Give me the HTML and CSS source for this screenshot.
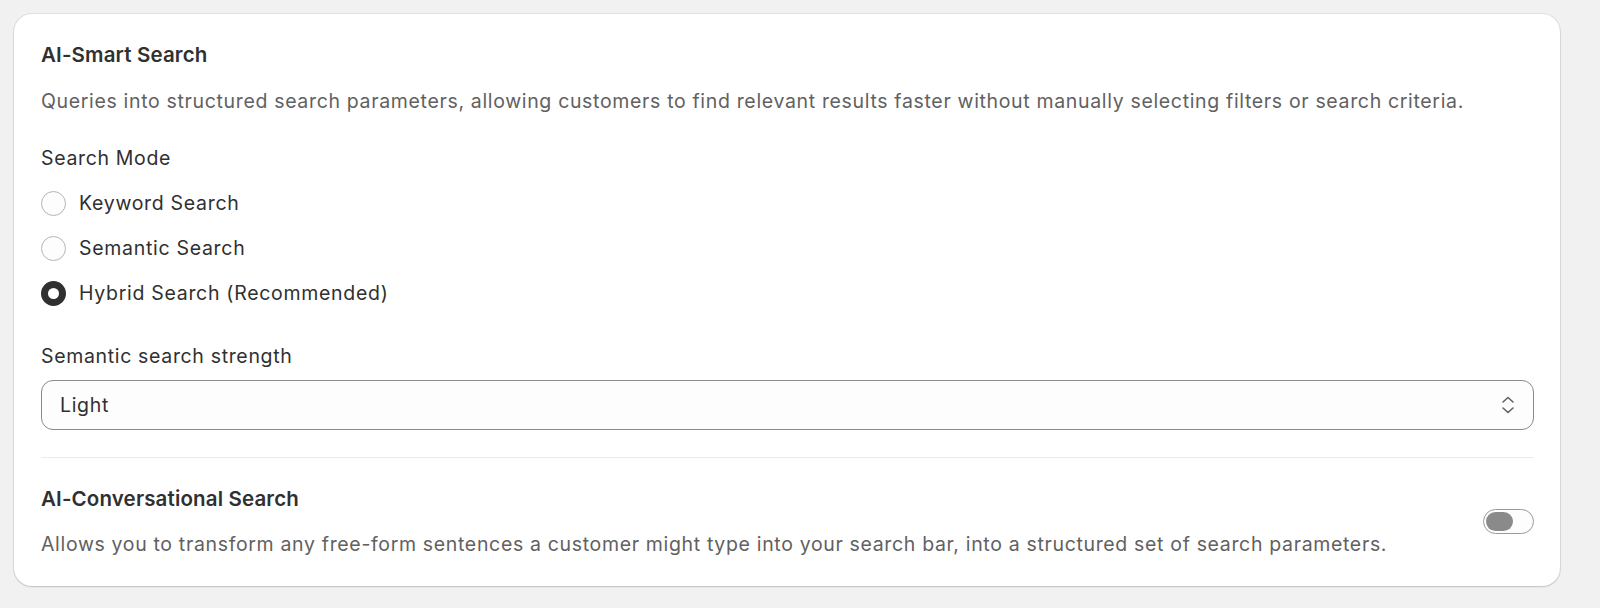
FILE: index.html
```html
<!DOCTYPE html>
<html lang="en">
<head>
<meta charset="utf-8">
<title>AI Search Settings</title>
<link rel="stylesheet" href="styles.css">
</head>
<body>
<div class="page">
  <section class="card">
    <h2 class="heading">AI-Smart Search</h2>
    <p class="desc">Queries into structured search parameters, allowing customers to find relevant results faster without manually selecting filters or search criteria.</p>

    <div class="group-label">Search Mode</div>
    <div class="radios">
      <label class="radio-row"><span class="radio"></span><span class="radio-text">Keyword Search</span></label>
      <label class="radio-row"><span class="radio"></span><span class="radio-text">Semantic Search</span></label>
      <label class="radio-row"><span class="radio radio-on"></span><span class="radio-text">Hybrid Search (Recommended)</span></label>
    </div>

    <div class="field-label">Semantic search strength</div>
    <div class="select">
      <span class="select-value">Light</span>
      <svg class="select-icon" width="16" height="20" viewBox="0 0 16 20" fill="none" stroke="#616161" stroke-width="1.6" stroke-linecap="round" stroke-linejoin="round">
        <path d="M3 7 L8 2.5 L13 7"/>
        <path d="M3 13 L8 17.5 L13 13"/>
      </svg>
    </div>

    <hr class="divider">

    <div class="toggle-section">
      <div class="toggle-text">
        <h2 class="heading">AI-Conversational Search</h2>
        <p class="desc desc-tight">Allows you to transform any free-form sentences a customer might type into your search bar, into a structured set of search parameters.</p>
      </div>
      <span class="toggle"><span class="knob"></span></span>
    </div>
  </section>
</div>
</body>
</html>
```

FILE: styles.css
```css
* { box-sizing: border-box; }

html, body {
  margin: 0;
  padding: 0;
  background: #f1f1f1;
}

body {
  font-family: Inter, "Noto Sans", "Liberation Sans", sans-serif;
  color: #303030;
}

.page {
  padding: 14px 40px 22px 14px;
}

.card {
  background: #ffffff;
  border-radius: 18px;
  box-shadow: 0 0 0 1px rgba(0, 0, 0, 0.07), 0 1px 2px rgba(0, 0, 0, 0.14);
  padding: 26px 26px 27px 27px;
}

.heading {
  margin: 0;
  font-size: 20.5px;
  line-height: 30px;
  font-weight: 600;
  letter-spacing: 0.15px;
  color: #303030;
}

.desc {
  margin: 16px 0 0;
  font-size: 19.5px;
  line-height: 30px;
  letter-spacing: 0.66px;
  color: #616161;
}

.desc-tight {
  margin-top: 15px;
}

.group-label {
  margin-top: 27px;
  font-size: 19.5px;
  line-height: 30px;
  letter-spacing: 0.66px;
}

.radios {
  margin-top: 15px;
  display: flex;
  flex-direction: column;
  gap: 15px;
}

.radio-row {
  display: flex;
  align-items: center;
  gap: 13px;
  height: 30px;
  font-size: 19.5px;
  line-height: 30px;
  letter-spacing: 0.7px;
  color: #303030;
}

.radio {
  width: 25px;
  height: 25px;
  border-radius: 50%;
  border: 1px solid #b5b5b5;
  background: #fdfdfd;
  flex: none;
}

.radio-on {
  border: 7px solid #303030;
  background: #ffffff;
}

.field-label {
  margin-top: 33px;
  font-size: 19.5px;
  line-height: 30px;
  letter-spacing: 0.66px;
}

.select {
  margin-top: 9px;
  height: 50px;
  border: 1px solid #8a8a8a;
  border-radius: 12px;
  background: #fdfdfd;
  display: flex;
  align-items: center;
  justify-content: space-between;
  padding: 0 17px 0 18px;
}

.select-value {
  font-size: 19.5px;
  letter-spacing: 0.66px;
  color: #303030;
}

.select-icon {
  flex: none;
}

.divider {
  margin: 27px 0 0;
  border: 0;
  height: 1px;
  background: #ebebeb;
}

.toggle-section {
  margin-top: 26px;
  display: flex;
  align-items: center;
  justify-content: space-between;
}

.toggle {
  flex: none;
  width: 51px;
  height: 25px;
  border: 1.5px solid #9a9a9a;
  border-radius: 13px;
  background: #fdfdfd;
  display: flex;
  align-items: center;
  padding-left: 2px;
}

.knob {
  width: 27px;
  height: 19px;
  border-radius: 10px;
  background: #8a8a8a;
}
```
